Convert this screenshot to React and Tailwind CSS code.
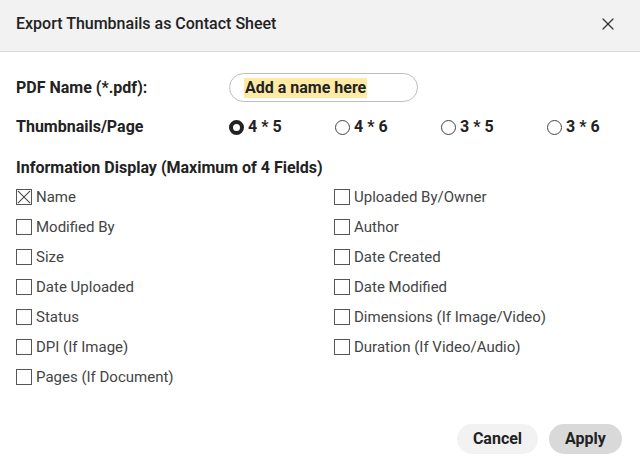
import { X } from "lucide-react";

const leftFields = ["Name", "Modified By", "Size", "Date Uploaded", "Status", "DPI (If Image)", "Pages (If Document)"];
const rightFields = ["Uploaded By/Owner", "Author", "Date Created", "Date Modified", "Dimensions (If Image/Video)", "Duration (If Video/Audio)"];
const layouts = ["4 * 5", "4 * 6", "3 * 5", "3 * 6"];

const Checkbox = ({ label, checked }) => (
  <div className="flex items-center h-[30px]">
    <div className="relative w-[16px] h-[16px] border border-[#555] bg-white shrink-0">
      {checked && (
        <svg viewBox="0 0 16 16" className="absolute inset-0 w-full h-full">
          <path d="M1 1L15 15M15 1L1 15" stroke="#444" strokeWidth="1.2" />
        </svg>
      )}
    </div>
    <span className="ml-[4px] text-[15px] text-[#444]">{label}</span>
  </div>
);

const Radio = ({ label, checked }) => (
  <div className="flex items-center w-[106px] shrink-0">
    {checked ? (
      <div className="w-[15px] h-[15px] rounded-full border-[4.5px] border-[#222] bg-white" />
    ) : (
      <div className="w-[15px] h-[15px] rounded-full border border-[#444] bg-white" />
    )}
    <span className="ml-[4px] text-[16px] font-bold text-[#222]">{label}</span>
  </div>
);

export default function App() {
  return (
    <div className="w-[640px] h-[466px] bg-white flex flex-col" style={{ fontFamily: "Roboto, 'Liberation Sans', sans-serif" }}>
      <div className="h-[52px] bg-[#f2f2f2] border-b border-[#dcdcdc] flex items-center justify-between pl-[16px] pr-[22px] pb-[3px] shrink-0">
        <span className="text-[16px] font-medium text-[#222]">Export Thumbnails as Contact Sheet</span>
        <X className="w-[20px] h-[20px] text-[#333]" strokeWidth={1.5} />
      </div>
      <div className="px-[16px] pt-[21px] flex flex-col">
        <div className="flex items-center h-[29px]">
          <span className="w-[213px] shrink-0 text-[16px] font-bold text-[#222]">PDF Name (*.pdf):</span>
          <div className="w-[189px] h-[29px] rounded-full border border-[#bdbdbd] flex items-center pl-[14px]">
            <span className="bg-[#feeaa5] text-[16px] font-bold text-[#222] px-[1px] leading-[20px]">Add a name here</span>
          </div>
        </div>
        <div className="flex items-center h-[20px] mt-[15px]">
          <span className="w-[213px] shrink-0 text-[16px] font-bold text-[#222]">Thumbnails/Page</span>
          {layouts.map((l, i) => (
            <Radio key={l} label={l} checked={i === 0} />
          ))}
        </div>
        <div className="mt-[21px] text-[16px] font-bold text-[#222] h-[20px] leading-[20px]">
          Information Display (Maximum of 4 Fields)
        </div>
        <div className="flex mt-[4px]">
          <div className="w-[318px] flex flex-col">
            {leftFields.map((f, i) => (
              <Checkbox key={f} label={f} checked={i === 0} />
            ))}
          </div>
          <div className="flex flex-col">
            {rightFields.map((f) => (
              <Checkbox key={f} label={f} />
            ))}
          </div>
        </div>
      </div>
      <div className="flex justify-end gap-[11px] pr-[18px] mt-[32px]">
        <button className="h-[30px] w-[81px] rounded-full bg-[#f2f2f2] text-[16px] font-bold text-[#222]">Cancel</button>
        <button className="h-[30px] w-[73px] rounded-full bg-[#d9d9d9] text-[16px] font-bold text-[#222]">Apply</button>
      </div>
    </div>
  );
}
